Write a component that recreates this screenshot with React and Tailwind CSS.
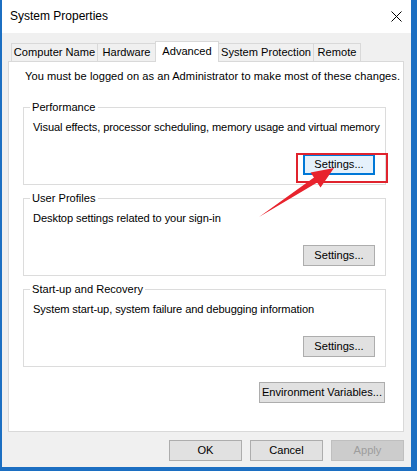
const tabs = [
  { label: 'Computer Name', w: 'w-[87px]' },
  { label: 'Hardware', w: 'w-[59px]' },
  { label: 'Advanced', w: 'w-[64px]', active: true },
  { label: 'System Protection', w: 'w-[96px]' },
  { label: 'Remote', w: 'w-[48px]' },
];

function Button({ children, className = '', focused = false, disabled = false }) {
  let tone = 'border border-[#adadad] bg-[#e1e1e1] text-black';
  if (focused) tone = 'border-2 border-[#0078d7] bg-[#e5f1fb] text-black';
  if (disabled) tone = 'border border-[#bfbfbf] bg-[#cccccc] text-[#9d9d9d]';
  return (
    <button type="button" className={`flex items-center justify-center whitespace-nowrap leading-[15px] ${tone} ${className}`}>
      {children}
    </button>
  );
}

function GroupBox({ title, text, focused }) {
  return (
    <div className="w-[363px] h-[78px] border border-[#dcdcdc] flex flex-col">
      <span className="block w-fit -mt-[8px] ml-[6px] px-[2px] bg-white leading-[15px]">{title}</span>
      <p className="ml-[9px] mt-[5px] leading-[15px] tracking-[-0.1px]">{text}</p>
      <Button focused={focused} className="mt-auto self-end mr-[10px] mb-[9px] w-[72px] h-[21px]">
        Settings...
      </Button>
    </div>
  );
}

export default function App() {
  return (
    <div className="relative w-[417px] h-[471px] bg-[#1c6fc2] pl-[2px] text-[11.1px] whitespace-nowrap text-black font-['Liberation_Sans',sans-serif]">
      <div className="w-[409px] h-[467px] bg-[#f0f0f0] flex flex-col">
        {/* title bar */}
        <div className="h-[33px] bg-white flex items-center justify-between pl-[8px] pr-[9px]">
          <span className="leading-[15px] text-[12px]">System Properties</span>
          <svg width="11" height="11" viewBox="0 0 11 11" className="stroke-black">
            <path d="M0.5 0.5 L10.5 10.5 M10.5 0.5 L0.5 10.5" strokeWidth="1" fill="none" />
          </svg>
        </div>

        <div className="flex-1 flex flex-col pl-[6px] pr-[7px] pt-[8px]">
          {/* tab strip */}
          <div className="h-[20px] flex items-end pl-[3px]">
            {tabs.map((t) =>
              t.active ? (
                <div
                  key={t.label}
                  className={`${t.w} h-[21px] -mb-px -ml-px relative z-10 bg-white border-t border-l border-r border-[#d9d9d9] flex items-center justify-center leading-[15px] pb-[2px]`}
                >
                  {t.label}
                </div>
              ) : (
                <div
                  key={t.label}
                  className={`${t.w} h-[18px] -ml-px first:ml-0 bg-[#f0f0f0] border-t border-l border-r border-[#d9d9d9] flex items-center justify-center leading-[15px]`}
                >
                  {t.label}
                </div>
              )
            )}
          </div>

          {/* tab page */}
          <div className="h-[371px] bg-white border border-[#d9d9d9] pt-[7px] pl-[14px] flex flex-col">
            <p className="ml-[2px] leading-[15px] tracking-[0.05px]">You must be logged on as an Administrator to make most of these changes.</p>
            <div className="mt-[23px] flex flex-col gap-[13px]">
              <GroupBox
                title="Performance"
                text="Visual effects, processor scheduling, memory usage and virtual memory"
                focused
              />
              <GroupBox title="User Profiles" text="Desktop settings related to your sign-in" />
              <GroupBox title="Start-up and Recovery" text="System start-up, system failure and debugging information" />
            </div>
            <div className="w-[363px] flex justify-end pr-[1px] mt-[15px]">
              <Button className="w-[126px] h-[21px]">Environment Variables...</Button>
            </div>
          </div>

          {/* dialog buttons */}
          <div className="mt-[8px] flex justify-end gap-[8px]">
            <Button className="w-[73px] h-[21px]">OK</Button>
            <Button className="w-[73px] h-[21px]">Cancel</Button>
            <Button disabled className="w-[73px] h-[21px]">Apply</Button>
          </div>
        </div>
      </div>

      {/* red callout */}
      <svg className="absolute inset-0 pointer-events-none" width="417" height="471" viewBox="0 0 417 471">
        <rect x="297" y="154" width="90" height="28" fill="none" stroke="#e0232d" strokeWidth="2" />
        <polygon
          points="334,168 310.5,172.5 314,177.5 259,217 317.2,182.5 320.5,187.5"
          fill="#e8232d"
        />
      </svg>
    </div>
  );
}
